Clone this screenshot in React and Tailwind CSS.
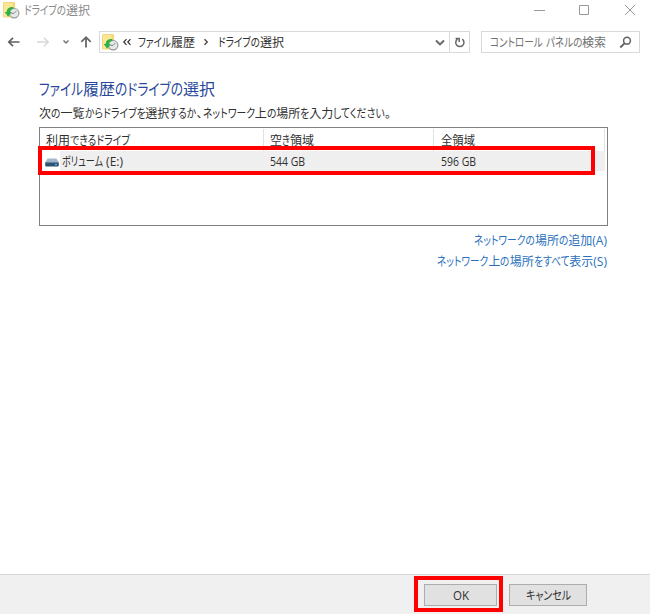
import React, { useLayoutEffect, useRef } from "react";

const KANA = /([\u3040-\u30ff]+)/;

// Text with condensed kana: kanji keep their width, kana runs share what is left of `w`.
function Fit({ text, w, className = "" }) {
  const ref = useRef(null);
  const parts = text.split(KANA).filter(Boolean);
  const hasKana = KANA.test(text);
  useLayoutEffect(() => {
    const runs = [...ref.current.children].map((el) => ({
      el,
      inner: el.firstChild,
      kana: el.dataset.kana === "1",
    }));
    runs.forEach((r) => (r.width = r.inner.getBoundingClientRect().width));
    const sum = (k) => runs.filter((r) => r.kana === k).reduce((a, r) => a + r.width, 0);
    const k = (w - sum(false)) / sum(true);
    runs.forEach((r) => {
      const f = r.kana ? k : 1;
      r.el.style.width = r.width * f + "px";
      r.inner.style.transform = `scaleX(${f})`;
    });
  }, [text, w]);
  return (
    <span ref={ref} className={"flex shrink-0 whitespace-pre " + className}>
      {parts.map((p, i) => (
        <span key={i} data-kana={!hasKana || KANA.test(p) ? "1" : "0"} className="block">
          <span className="inline-block origin-left [font-feature-settings:'palt']">{p}</span>
        </span>
      ))}
    </span>
  );
}

function HistoryIcon() {
  return (
    <svg width="17" height="17" viewBox="0 0 17 17" className="shrink-0">
      <path d="M.5 .5h11v14.5H.5z" fill="#fde694" stroke="#efcf6c" strokeWidth=".8" />
      <path d="M9.5 1h2v13h-2z" fill="#f6d873" />
      <circle cx="11.2" cy="11.2" r="4.7" fill="#e6e8e8" stroke="#989c9c" strokeWidth="1.2" />
      <path d="M11 11.4 13.4 9M11 11.4H8.6" stroke="#858585" strokeWidth="1" fill="none" />
      <path d="M10.4 5C6 4.8 3.8 6.8 3.6 10H1.6l3.6 4.8L9 10H7c.1-1.8 1.2-2.8 3.4-3z" fill="#2fb145" />
    </svg>
  );
}

function DriveIcon() {
  return (
    <svg width="14" height="9" viewBox="0 0 14 9" className="shrink-0">
      <path d="M2.5 .6h9L13.7 4.6H.3z" fill="#a3b8cc" />
      <rect x=".2" y="4" width="13.6" height="4.6" rx="1" fill="#2f5273" />
      <path d="M.8 4.4h12.4" stroke="#6a8fb0" />
      <path d="M10 6.6h2" stroke="#7cc8e0" />
    </svg>
  );
}

function Stroke({ d, w = 16, h = 16, color = "#555", sw = 1.5 }) {
  return (
    <svg width={w} height={h} viewBox={`0 0 ${w} ${h}`} className="shrink-0" fill="none" stroke={color} strokeWidth={sw}>
      <path d={d} />
    </svg>
  );
}

export default function App() {
  return (
    <div className="relative flex h-[614px] w-[650px] flex-col overflow-hidden bg-white text-[12px] leading-[16px] text-[#303030] [font-family:'Open_Sans','Noto_Sans_CJK_JP',sans-serif]">
      <header className="flex h-[22px] shrink-0 items-start justify-between pl-[3px] pr-[14px] pt-[2px]">
        <div className="flex gap-[4px]">
          <HistoryIcon />
          <Fit text="ドライブの選択" w={66} className="pt-[1px] text-[#8a8a8a]" />
        </div>
        <div className="flex gap-[33px]">
          <Stroke w={12} d="M0 8.5h11" color="#999" sw={1} />
          <Stroke w={12} d="M.5 3.5h9v9h-9z" color="#999" sw={1} />
          <Stroke w={12} d="M1 3l10 10M11 3L1 13" color="#999" sw={1} />
        </div>
      </header>

      <nav className="flex h-[40px] shrink-0 items-center pl-[6px] pr-[10px]">
        <Stroke d="M13.5 8H3M7 3.8 2.8 8 7 12.2" color="#606060" sw={1.7} />
        <div className="w-[13px]" />
        <Stroke d="M2 8h11M9 3.8 13.2 8 9 12.2" color="#d8d8d8" />
        <div className="w-[11px]" />
        <Stroke w={8} h={8} d="M1.5 2.5 4 5l2.5-2.5" color="#777" />
        <div className="w-[8px]" />
        <Stroke d="M8 13.5V3.2M3.3 7.9 8 3.2l4.7 4.7" color="#686868" sw={1.8} />
        <div className="ml-[5px] flex h-[22px] w-[371px] items-center border border-[#d9d9d9] pl-[2px]">
          <HistoryIcon />
          <div className="w-[3px]" />
          <Stroke w={10} h={10} d="M4.5 2.2 1.8 5l2.7 2.8M8.5 2.2 5.8 5l2.7 2.8" color="#333" sw={1.2} />
          <div className="w-[6px]" />
          <Fit text="ファイル履歴" w={57} className="pt-[1px]" />
          <div className="w-[8px]" />
          <Stroke w={7} h={10} d="M1.5 2.2 4.3 5 1.5 7.8" color="#444" sw={1.3} />
          <div className="w-[8px]" />
          <Fit text="ドライブの選択" w={66} className="pt-[1px]" />
          <div className="ml-auto flex h-full items-center">
            <Stroke w={18} d="M5 6.5l4 4 4-4" color="#666" sw={1.9} />
            <div className="flex h-full w-[20px] items-center justify-center border-l border-[#d9d9d9]">
              <Stroke w={14} h={14} d="M9.3 4.2A4.1 4.1 0 1 1 4.4 4.2M2.6 3.4h3.6v3.6" color="#666" sw={1.5} />
            </div>
          </div>
        </div>
        <div className="ml-auto flex h-[22px] w-[159px] items-center justify-between border border-[#d9d9d9] pl-[8px] pr-[7px] text-[#707070]">
          <Fit text="コントロール パネルの検索" w={116} className="pt-[1px]" />
          <svg width="13" height="14" viewBox="0 0 13 14" fill="none" stroke="#606060">
            <circle cx="8" cy="5.7" r="3.4" strokeWidth="1.5" />
            <path d="M5.5 8.3 1.3 12.5" strokeWidth="1.8" />
          </svg>
        </div>
      </nav>

      <main className="flex flex-1 flex-col pl-[39px] pr-[42px] pt-[16px]">
        <h1 className="flex h-[21px] items-center text-[16px] text-[#28489c]">
          <Fit text="ファイル履歴のドライブの選択" w={176} />
        </h1>
        <p className="mt-[7px] flex">
          <Fit text="次の一覧からドライブを選択するか、ネットワーク上の場所を入力してください。" w={352} />
        </p>
        <div className="mt-[5px] flex h-[99px] flex-col border border-[#808080]">
          <div className="flex h-[23px] shrink-0 pr-[2px] pt-[1px]">
            <div className="flex w-[224px] items-center border-r border-[#e2e2e2] pl-[6px] pt-[1px]">
              <Fit text="利用できるドライブ" w={84} />
            </div>
            <div className="flex w-[170px] items-center border-r border-[#e2e2e2] pl-[6px] pt-[1px]">
              <Fit text="空き領域" w={44} />
            </div>
            <div className="flex flex-1 items-center border-r border-[#e2e2e2] pl-[7px] pt-[1px]">
              <Fit text="全領域" w={34} />
            </div>
          </div>
          <div className="flex h-[20px] items-center pl-[5px] pr-[2px]">
            <div className="pt-[2px]">
              <DriveIcon />
            </div>
            <div className="ml-[1px] flex h-full flex-1 items-center bg-[#efefef] pt-[2px]">
              <div className="flex w-[210px] pl-[2px]">
                <Fit text="ボリューム" w={41} />
                <Fit text=" (E:)" w={20} />
              </div>
              <div className="w-[171px]">
                <Fit text="544 GB" w={35} />
              </div>
              <Fit text="596 GB" w={35} />
            </div>
          </div>
        </div>
        <div className="mt-[7px] flex flex-col items-end gap-[5px] pr-[1px] text-[#2a70bd]">
          <Fit text="ネットワークの場所の追加(A)" w={133} />
          <Fit text="ネットワーク上の場所をすべて表示(S)" w={170} />
        </div>
      </main>

      <footer className="flex h-[40px] shrink-0 items-start justify-end gap-[12px] border-t border-[#d8d8d8] bg-[#f0f0f0] pr-[63px] pt-[9px]">
        <button className="flex h-[22px] w-[73px] items-center justify-center border border-[#adadad] bg-[#e1e1e1] pt-[1px]">
          <Fit text="OK" w={16} />
        </button>
        <button className="flex h-[22px] w-[78px] items-center justify-center border border-[#adadad] bg-[#e1e1e1] pt-[1px]">
          <Fit text="キャンセル" w={45} />
        </button>
      </footer>

      <div className="absolute left-[38px] top-[146px] h-[29px] w-[557px] border-4 border-[#ff0000]" />
      <div className="absolute left-[414px] top-[576px] h-[36px] w-[89px] border-4 border-[#ff0000]" />
    </div>
  );
}
